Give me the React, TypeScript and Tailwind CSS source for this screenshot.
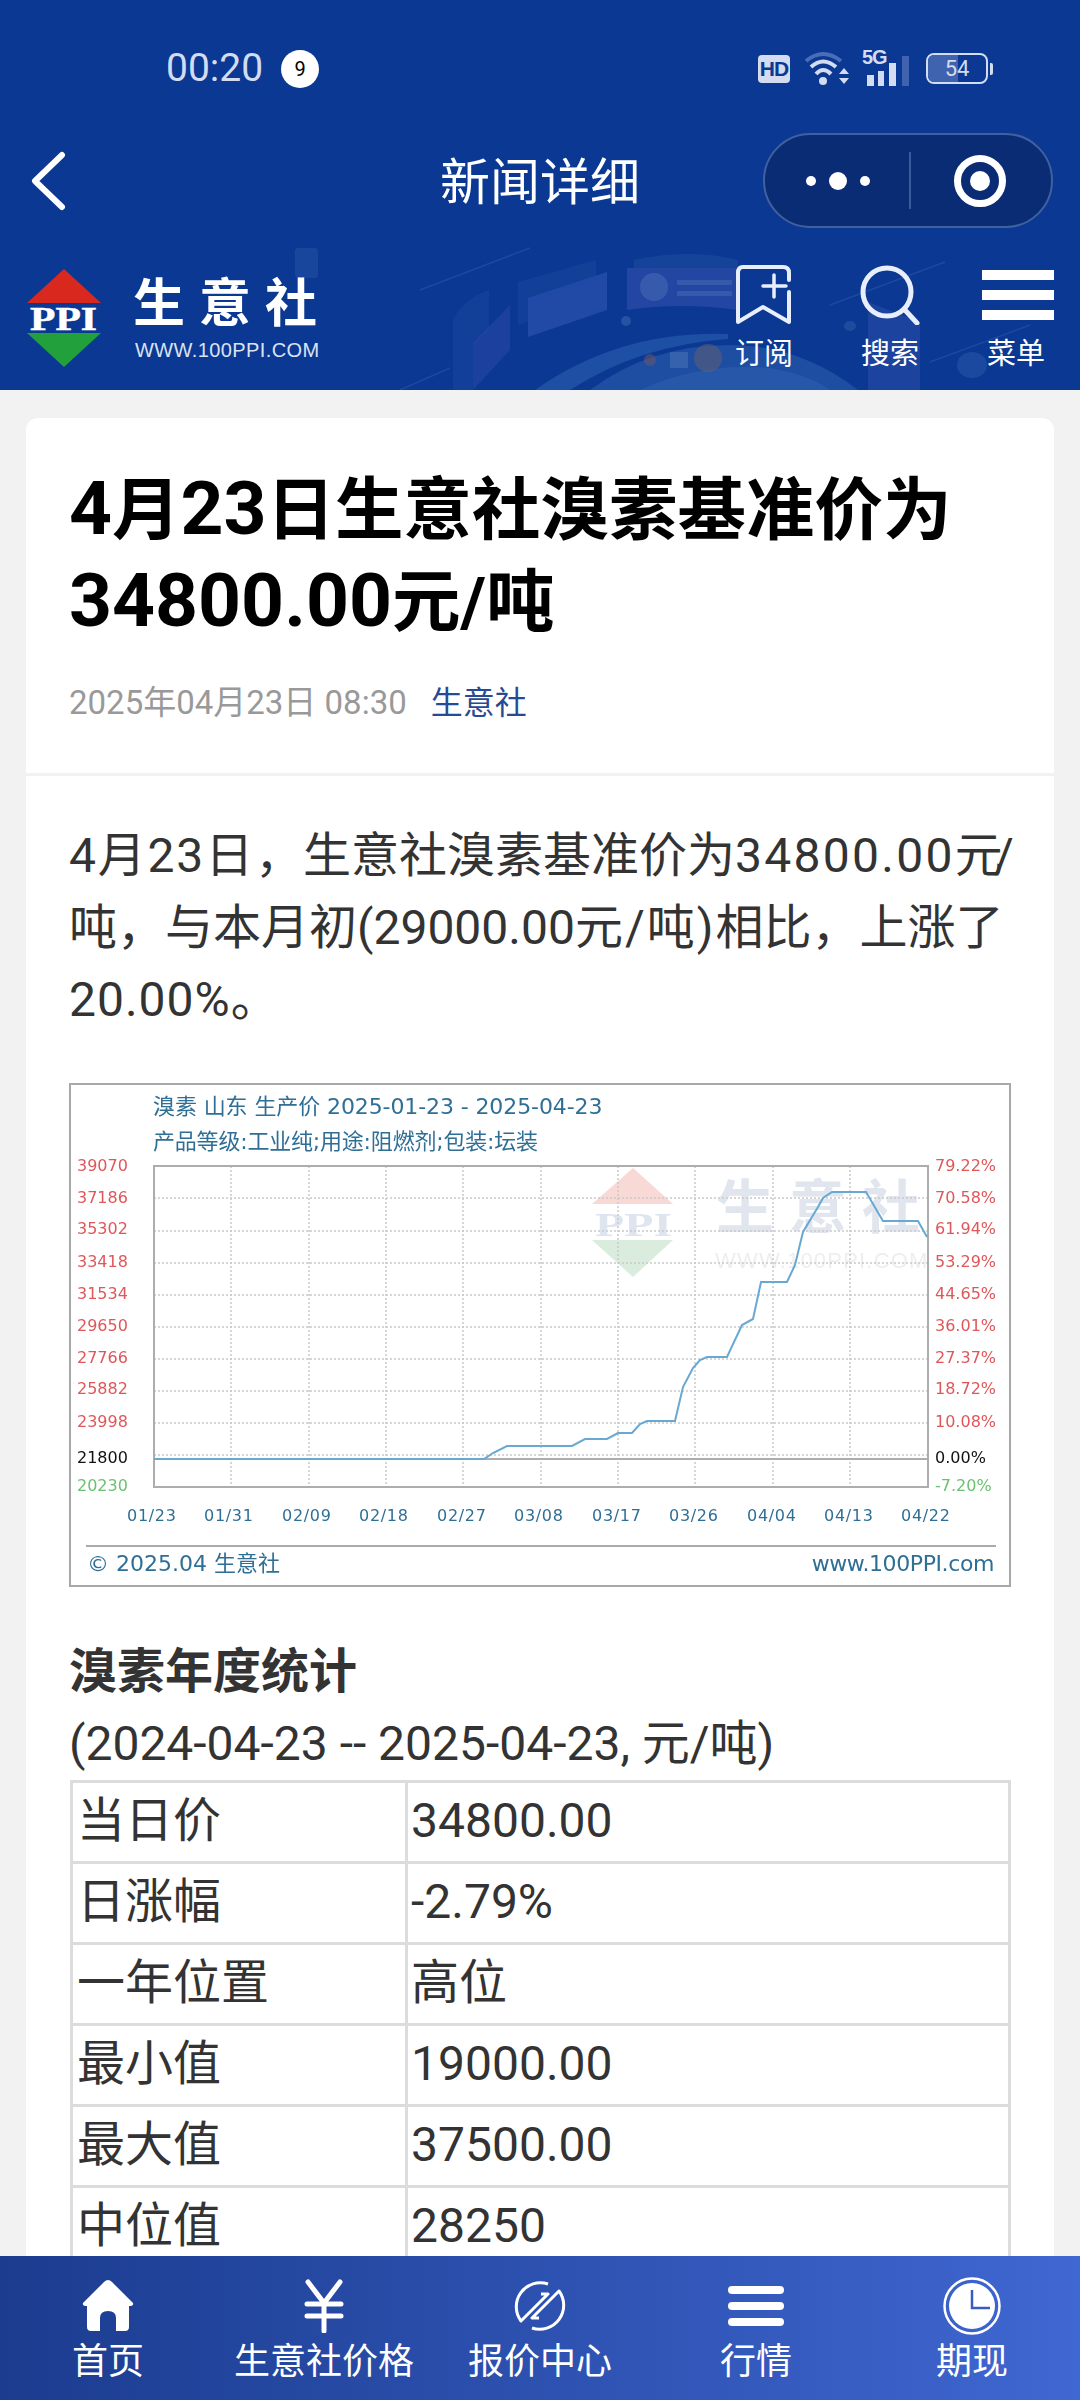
import React from "react";

const rows = [
  ["当日价", "34800.00"],
  ["日涨幅", "-2.79%"],
  ["一年位置", "高位"],
  ["最小值", "19000.00"],
  ["最大值", "37500.00"],
  ["中位值", "28250"],
];

const leftLabels: [string, number][] = [
  ["39070", 1171],
  ["37186", 1203],
  ["35302", 1234],
  ["33418", 1267],
  ["31534", 1299],
  ["29650", 1331],
  ["27766", 1363],
  ["25882", 1394],
  ["23998", 1427],
];

const rightLabels: [string, number][] = [
  ["79.22%", 1171],
  ["70.58%", 1203],
  ["61.94%", 1234],
  ["53.29%", 1267],
  ["44.65%", 1299],
  ["36.01%", 1331],
  ["27.37%", 1363],
  ["18.72%", 1394],
  ["10.08%", 1427],
];

const dates: [string, number][] = [
  ["01/23", 127],
  ["01/31", 204],
  ["02/09", 282],
  ["02/18", 359],
  ["02/27", 437],
  ["03/08", 514],
  ["03/17", 592],
  ["03/26", 669],
  ["04/04", 747],
  ["04/13", 824],
  ["04/22", 901],
];

const hLines = [1198, 1231, 1263, 1295, 1327, 1359, 1391, 1423, 1455];
const vLines = [231, 309, 386, 463, 541, 618, 695, 773, 850];

const pricePoints =
  "154,1459 484,1459 493,1453 507,1446 572,1446 585,1439 607,1439 618,1433 632,1433 640,1424 647,1421 675,1421 683,1387 693,1368 700,1360 707,1357 727,1357 742,1325 753,1319 761,1282 787,1282 795,1265 803,1232 818,1207 823,1198 832,1192 866,1192 883,1221 918,1221 927,1237";

function HeaderArt() {
  return (
    <svg className="absolute left-0 top-[228px] h-[162px] w-[1080px] opacity-60" viewBox="0 228 1080 162">
      <rect x="295" y="248" width="23" height="30" rx="3" fill="#3d6fb8" opacity="0.45" />
      <path d="M453 390 L453 320 Q462 300 489 290 L489 330 L473 345 L473 390Z" fill="#2a52a8" opacity="0.45" />
      <path d="M473 390 L473 343 L510 305 L510 350 Z" fill="#3a50b4" opacity="0.6" />
      <path d="M518 325 L518 282 L596 260 L596 300 Z" fill="#1e4da2" opacity="0.7" />
      <path d="M528 337 L528 298 L607 272 L607 310 Z" fill="#2f57b4" />
      <path d="M634 260 Q690 248 738 260 L738 270 L634 270 Z" fill="#1f52a4" opacity="0.8" />
      <path d="M627 268 L738 268 L738 310 Q680 302 627 310 Z" fill="#3450ae" />
      <circle cx="654" cy="287" r="14" fill="#6279c4" opacity="0.8" />
      <rect x="677" y="280" width="55" height="5" fill="#6a83c8" opacity="0.6" />
      <rect x="677" y="291" width="55" height="5" fill="#6a83c8" opacity="0.6" />
      <ellipse cx="626" cy="321" rx="5" ry="5" fill="#5a80c0" opacity="0.6" />
      <ellipse cx="850" cy="326" rx="6" ry="5" fill="#4f7abd" opacity="0.5" />
      <path d="M535 390 Q620 330 728 334 L728 339 Q640 345 570 390Z" fill="#2f64b2" opacity="0.9" />
      <path d="M590 390 Q650 345 730 345 Q800 345 858 390Z" fill="#2b5dae" />
      <path d="M640 390 Q700 362 770 368 Q810 375 830 390Z" fill="#3a6cb8" />
      <circle cx="650" cy="360" r="6" fill="#b06a50" opacity="0.55" />
      <circle cx="708" cy="358" r="14" fill="#9a7a5e" opacity="0.55" />
      <rect x="670" y="352" width="18" height="16" fill="#5d86c4" opacity="0.8" />
      <path d="M868 302 L920 322 L920 390 L868 390 Z" fill="#3552ae" opacity="0.7" />
      <ellipse cx="972" cy="365" rx="15" ry="13" fill="#2d5cae" opacity="0.8" />
      <path d="M420 290 L530 248 M400 390 L450 368 M830 305 L945 262 M930 362 L1030 325" stroke="#3d68b4" strokeWidth="1.5" opacity="0.6" />
    </svg>
  );
}

function StatusIcons() {
  return (
    <div className="flex items-center">
      <div className="flex h-[28px] w-[32px] items-center justify-center rounded-[4px] bg-[#d3dcf0] text-[21px] font-bold leading-none tracking-[-1px] text-[#0a3892] [font-family:'Liberation_Sans',sans-serif]">
        HD
      </div>
      <svg className="ml-[14px] h-[36px] w-[45px]" viewBox="0 0 45 36" fill="none">
        <path d="M2 10 Q19 -4 37 10" stroke="#4a6db5" strokeWidth="4" />
        <path d="M7 16 Q19 5 32 16" stroke="#d3dcf0" strokeWidth="4" />
        <path d="M12 23 Q19 15 27 23" stroke="#d3dcf0" strokeWidth="4" />
        <circle cx="19" cy="30" r="4" fill="#d3dcf0" />
        <path d="M35 23 L40 17 L45 23Z M35 27 L45 27 L40 33Z" fill="#d3dcf0" />
      </svg>
      <div className="relative ml-[13px] h-[36px] w-[47px]">
        <span className="absolute left-0 top-[-4px] text-[20px] font-bold leading-none tracking-[-1px] text-[#d3dcf0] [font-family:'Liberation_Sans',sans-serif]">
          5G
        </span>
        <svg className="absolute left-0 top-0 h-[36px] w-[47px]" viewBox="0 0 47 36">
          <rect x="5" y="24" width="7" height="11" fill="#d3dcf0" />
          <rect x="16" y="20" width="6" height="15" fill="#d3dcf0" />
          <rect x="27" y="12" width="7" height="23" fill="#d3dcf0" />
          <rect x="40" y="5" width="7" height="30" fill="#3f63ae" />
        </svg>
      </div>
      <div className="relative ml-[17px] flex h-[31px] w-[62px] items-center justify-center overflow-hidden rounded-[8px] border-2 border-[#d3dcf0] text-[22px] leading-none text-[#d3dcf0]">
        <div className="absolute inset-y-0 left-0 w-[30px] bg-[#3f63ae]" />
        <span className="relative">54</span>
      </div>
      <div className="ml-[2px] h-[12px] w-[3px] rounded-r-[2px] bg-[#d3dcf0]" />
    </div>
  );
}

function Capsule() {
  return (
    <div className="flex h-[95px] w-[290px] items-center rounded-full border-2 border-[#40619f] bg-[#0a2c75]">
      <div className="flex w-[144px] items-center justify-center gap-[13px] pl-[2px]">
        <div className="h-[10px] w-[10px] rounded-full bg-white" />
        <div className="h-[18px] w-[18px] rounded-full bg-white" />
        <div className="h-[10px] w-[10px] rounded-full bg-white" />
      </div>
      <div className="h-[57px] w-[2px] bg-[#3b5c9c]" />
      <div className="flex flex-1 items-center justify-center pr-[2px]">
        <div className="flex h-[52px] w-[52px] items-center justify-center rounded-full border-[7px] border-white">
          <div className="h-[20px] w-[20px] rounded-full bg-white" />
        </div>
      </div>
    </div>
  );
}

function Logo() {
  return (
    <svg className="h-[100px] w-[76px]" viewBox="0 0 76 100">
      <polygon points="38,0 75,34 1,34" fill="#d9291f" />
      <text x="4" y="61" fontSize="33" fontWeight="700" fill="#fff" stroke="#fff" strokeWidth="0.5" fontFamily="Liberation Serif, serif" textLength="67" lengthAdjust="spacingAndGlyphs">
        PPI
      </text>
      <polygon points="1,64 75,64 38,98" fill="#22a03c" />
    </svg>
  );
}

function HeaderAction({ label, children }: { label: string; children: React.ReactNode }) {
  return (
    <div className="flex w-[72px] flex-col items-center">
      <div className="flex h-[62px] items-center justify-center">{children}</div>
      <span className="mt-[8px] whitespace-nowrap text-[29px] leading-[40px] text-white">{label}</span>
    </div>
  );
}

function Header() {
  return (
    <header className="relative h-[390px] shrink-0 overflow-hidden bg-[#0a3892]">
      <HeaderArt />
      <div className="relative">
        <div className="flex h-[133px] items-center justify-between pl-[166px] pr-[87px] pt-[4px]">
          <div className="flex items-center">
            <span className="text-[39px] leading-none text-[#d3dcf0]">00:20</span>
            <div className="ml-[18px] flex h-[38px] w-[38px] items-center justify-center rounded-full bg-white text-[20px] text-black">
              9
            </div>
          </div>
          <StatusIcons />
        </div>
        <div className="flex h-[95px] items-center justify-between pl-[30px] pr-[27px]">
          <svg className="h-[60px] w-[40px]" viewBox="0 0 40 60" fill="none">
            <path d="M32 4 L5 30 L32 56" stroke="#fff" strokeWidth="6" strokeLinecap="round" strokeLinejoin="round" />
          </svg>
          <span className="absolute left-0 right-0 pt-[4px] text-center text-[50px] leading-none text-white">新闻详细</span>
          <Capsule />
        </div>
        <div className="flex items-start justify-between pl-[26px] pr-[28px] pt-[36px]">
          <div className="flex">
            <div className="pt-[5px]">
              <Logo />
            </div>
            <div className="ml-[31px] flex flex-col pt-[5px]">
              <span className="whitespace-nowrap text-[52px] font-bold leading-[62px] tracking-[14px] text-white [font-family:'Noto_Sans_CJK_SC',sans-serif]">
                生意社
              </span>
              <span className="ml-[2px] mt-[8px] whitespace-nowrap text-[20px] leading-[22px] tracking-[0.4px] text-[#dbe3f3] [font-family:'Liberation_Sans',sans-serif]">
                WWW.100PPI.COM
              </span>
            </div>
          </div>
          <div className="flex gap-[54px]">
            <HeaderAction label="订阅">
              <svg className="h-[60px] w-[56px]" viewBox="0 0 56 60" fill="none" stroke="#e8eefb" strokeWidth="4" strokeLinejoin="round" strokeLinecap="round">
                <path d="M53 15 V8 Q53 2 47 2 H7 Q2 2 2 8 V57 L27 42 L53 57 V27" />
                <path d="M38 10 V32 M27 21 H50" strokeWidth="3.5" />
              </svg>
            </HeaderAction>
            <HeaderAction label="搜索">
              <svg className="h-[60px] w-[60px]" viewBox="0 0 60 60" fill="none" stroke="#e8eefb" strokeWidth="5" strokeLinecap="round">
                <circle cx="27" cy="27" r="24" />
                <path d="M44 44 L57 58" />
              </svg>
            </HeaderAction>
            <HeaderAction label="菜单">
              <div className="ml-[4px] flex w-[72px] shrink-0 flex-col gap-[10px]">
                <div className="h-[10px] bg-white blur-[0.6px]" />
                <div className="h-[10px] bg-white blur-[0.6px]" />
                <div className="h-[10px] bg-white blur-[0.6px]" />
              </div>
            </HeaderAction>
          </div>
        </div>
      </div>
    </header>
  );
}

function Chart() {
  return (
    <svg className="block h-[504px] w-[942px] blur-[0.4px]" viewBox="69 1083 942 504" style={{ fontFamily: "DejaVu Sans, Noto Sans CJK SC, sans-serif" }}>
      <rect x="70" y="1084" width="940" height="502" fill="#fff" stroke="#a8a8a8" strokeWidth="2" />
      <text x="153" y="1114" fontSize="22" fill="#2f6f96" letterSpacing="-0.1" xmlSpace="preserve">
        溴素 山东 生产价 2025-01-23 - 2025-04-23
      </text>
      <text x="153" y="1149" fontSize="22" fill="#2f6f96" letterSpacing="-0.2">
        产品等级:工业纯;用途:阻燃剂;包装:坛装
      </text>

      {/* watermark */}
      <polygon points="633,1168 673,1204 592,1204" fill="#f8d9d6" />
      <text x="595" y="1236" fontSize="34" fontWeight="700" fill="#dfe5ef" fontFamily="Liberation Serif, serif" textLength="77" lengthAdjust="spacingAndGlyphs">
        PPI
      </text>
      <polygon points="592,1240 673,1240 633,1277" fill="#d9ecdd" />
      <text x="716" y="1228" fontSize="58" fontWeight="700" fill="#e0e5ee" letterSpacing="15" fontFamily="Noto Sans CJK SC, sans-serif">
        生意社
      </text>
      <text x="715" y="1268" fontSize="22" fill="#eeeeee" letterSpacing="1.2" fontFamily="Liberation Sans, sans-serif">
        WWW.100PPI.COM
      </text>

      {hLines.map((y) => (
        <line key={y} x1="154" x2="928" y1={y} y2={y} stroke="#c9c9c9" strokeWidth="1.5" strokeDasharray="2 2" />
      ))}
      {vLines.map((x) => (
        <line key={x} x1={x} x2={x} y1="1166" y2="1487" stroke="#c9c9c9" strokeWidth="1.5" strokeDasharray="2 2" />
      ))}
      <rect x="154" y="1166" width="774" height="321" fill="none" stroke="#adadad" strokeWidth="2" />
      <line x1="154" x2="928" y1="1459" y2="1459" stroke="#adadad" strokeWidth="2" />
      <polyline points={pricePoints} fill="none" stroke="#68a8d2" strokeWidth="2" />

      {leftLabels.map(([t, y]) => (
        <text key={t} x="77" y={y} fontSize="16" fill="#e0575a">
          {t}
        </text>
      ))}
      <text x="77" y="1463" fontSize="16" fill="#111">
        21800
      </text>
      <text x="77" y="1491" fontSize="16" fill="#6cc070">
        20230
      </text>

      {rightLabels.map(([t, y]) => (
        <text key={t} x="935" y={y} fontSize="16" fill="#e0575a">
          {t}
        </text>
      ))}
      <text x="935" y="1463" fontSize="16" fill="#111">
        0.00%
      </text>
      <text x="935" y="1491" fontSize="16" fill="#6cc070">
        -7.20%
      </text>

      {dates.map(([t, x]) => (
        <text key={t} x={x} y="1521" fontSize="16" fill="#2f6f96" letterSpacing="0.7">
          {t}
        </text>
      ))}

      <line x1="86" x2="996" y1="1546" y2="1546" stroke="#ababab" strokeWidth="2" />
      <text x="87" y="1571" fontSize="22" fill="#2f6f96">
        © 2025.04 生意社
      </text>
      <text x="994" y="1571" fontSize="22" fill="#2f6f96" textAnchor="end" letterSpacing="-0.4">
        www.100PPI.com
      </text>
    </svg>
  );
}

function StatsTable() {
  return (
    <table className="ml-[1px] w-[941px] table-fixed border-collapse text-[48px] leading-none text-[#333]">
      <colgroup>
        <col className="w-[335px]" />
        <col />
      </colgroup>
      <tbody>
        {rows.map(([k, v]) => (
          <tr key={k} className="h-[81px]">
            <td className="border-[3px] border-[#dcdcdc] px-[4px] pb-[2px]">{k}</td>
            <td className="border-[3px] border-[#dcdcdc] px-[3px] pb-[2px]">{v}</td>
          </tr>
        ))}
      </tbody>
    </table>
  );
}

function HomeIcon() {
  return (
    <svg className="h-[52px] w-[52px]" viewBox="0 0 52 52" fill="#fff">
      <path d="M26 0 Q28 0 30 2 L51 23 Q52 26 47 26 V47 Q47 51 43 51 H34 V38 Q34 31 26 31 Q18 31 18 38 V51 H9 Q5 51 5 47 V26 Q0 26 1 23 L22 2 Q24 0 26 0Z" />
    </svg>
  );
}

function YenIcon() {
  return (
    <svg className="h-[54px] w-[40px]" viewBox="0 0 40 54" fill="none" stroke="#fff" strokeWidth="5" strokeLinecap="round">
      <path d="M4 3 L20 24 L36 3" />
      <path d="M3 25 H37 M3 37 H37" />
      <path d="M20 24 V52" />
    </svg>
  );
}

function QuoteIcon() {
  return (
    <svg className="h-[52px] w-[52px]" viewBox="0 0 52 52" fill="none" stroke="#fff" strokeWidth="3" strokeLinejoin="round">
      <path d="M34 4 A24 24 0 0 0 7 41 L34 14 H27" />
      <path d="M18 48 A24 24 0 0 0 45 11 L18 38 H25" />
    </svg>
  );
}

function ListIcon() {
  return (
    <div className="flex w-[56px] flex-col gap-[8px]">
      <div className="h-[8px] rounded-full bg-white blur-[0.5px]" />
      <div className="h-[8px] rounded-full bg-white blur-[0.5px]" />
      <div className="h-[8px] rounded-full bg-white blur-[0.5px]" />
    </div>
  );
}

function ClockIcon() {
  return (
    <svg className="h-[58px] w-[58px]" viewBox="0 0 58 58" fill="none">
      <circle cx="29" cy="29" r="27.5" stroke="#fff" strokeWidth="2.5" />
      <circle cx="29" cy="29" r="23" fill="#fff" />
      <path d="M29 13 V31 H47" stroke="#3a5cc0" strokeWidth="2.5" />
    </svg>
  );
}

const tabs: { label: string; icon: React.ReactNode }[] = [
  { label: "首页", icon: <HomeIcon /> },
  { label: "生意社价格", icon: <YenIcon /> },
  { label: "报价中心", icon: <QuoteIcon /> },
  { label: "行情", icon: <ListIcon /> },
  { label: "期现", icon: <ClockIcon /> },
];

function TabBar() {
  return (
    <nav className="relative grid h-[144px] shrink-0 grid-cols-5 bg-gradient-to-r from-[#1b3c8f] to-[#4067d2]">
      {tabs.map((t) => (
        <div key={t.label} className="flex flex-col items-center pt-[21px]">
          <div className="flex h-[58px] items-center justify-center">{t.icon}</div>
          <span className="mt-[3px] whitespace-nowrap text-[36px] leading-[48px] text-white">{t.label}</span>
        </div>
      ))}
    </nav>
  );
}

export default function App() {
  return (
    <div className="flex h-[2400px] w-[1080px] flex-col overflow-hidden bg-[#f2f2f2] [font-family:'Roboto','Noto_Sans_CJK_SC',sans-serif]">
      <Header />
      <main className="min-h-0 flex-1 overflow-hidden px-[26px] pt-[28px]">
        <div className="rounded-t-[12px] bg-white">
          <div className="border-b-[3px] border-[#f2f2f2] px-[43px] pb-[46px] pt-[47px]">
            <h1 className="whitespace-nowrap text-[68.5px] font-bold leading-[92px] text-black">
              <span className="text-[75px] leading-none">4</span>月<span className="text-[75px] leading-none">23</span>日生意社溴素基准价为
              <br />
              <span className="text-[75px] leading-none">34800.00</span>元/吨
            </h1>
            <p className="mt-[30px] flex items-baseline leading-[48px]">
              <span className="text-[33px] text-[#999]">2025年04月23日 08:30</span>
              <span className="ml-[24px] text-[32px] text-[#274a94]">生意社</span>
            </p>
          </div>
          <div className="px-[43px] pt-[44px]">
            <p className="whitespace-nowrap text-[48px] leading-[72px] text-[#333]">
              <span className="tracking-[1.8px]">4月23日</span>，生意社溴素基准价为<span className="tracking-[2.3px]">34800.00</span>
              <span className="tracking-[-9px]">元</span>/
              <br />
              吨，与本月初(29000.00<span className="tracking-[2px]">元/吨)</span>相比，上涨了
              <br />
              <span className="tracking-[1px]">20.00%</span>。
            </p>
            <div className="mt-[47px]">
              <Chart />
            </div>
            <h2 className="mt-[49px] text-[48px] font-bold leading-[72px] text-[#333]">溴素年度统计</h2>
            <p className="text-[48px] leading-[72px] text-[#333]">(2024-04-23 -- 2025-04-23, 元/吨)</p>
            <StatsTable />
          </div>
        </div>
      </main>
      <TabBar />
    </div>
  );
}
